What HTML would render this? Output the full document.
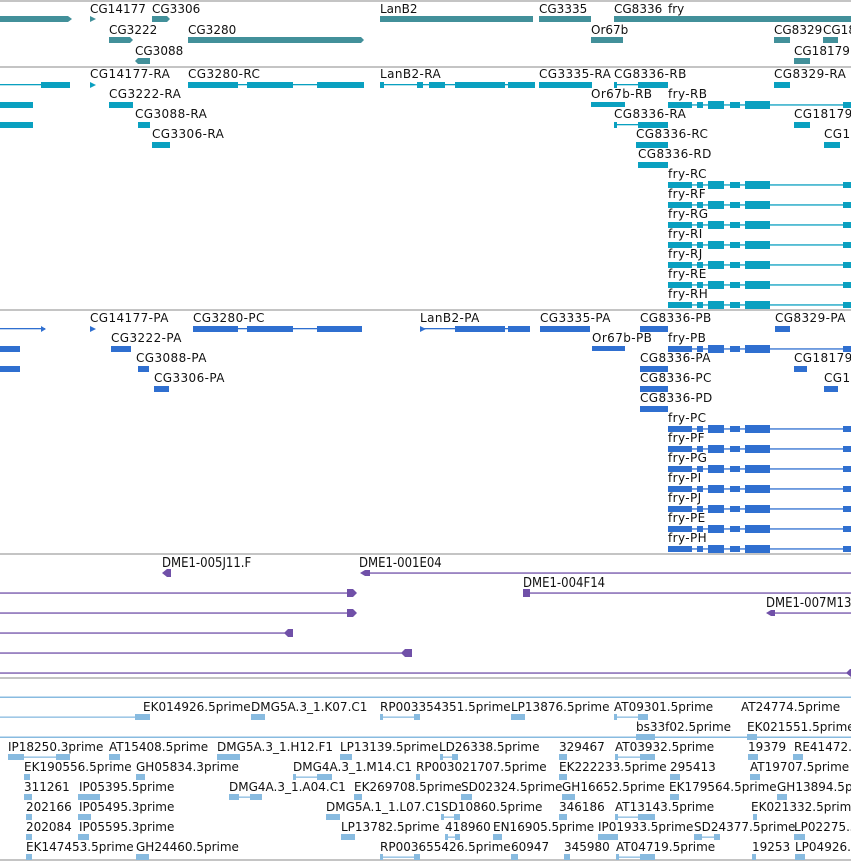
<!DOCTYPE html>
<html><head><meta charset="utf-8"><style>
html,body{margin:0;padding:0;background:#fff;overflow:hidden}
svg{display:block}
text{font-family:"DejaVu Sans","Liberation Sans",sans-serif;font-size:12px;fill:#111}
.t text{letter-spacing:0.4px}
.c text{font-family:"DejaVu Sans Condensed","DejaVu Sans",sans-serif;font-size:13px}
</style></head><body>
<svg width="851" height="862" xmlns="http://www.w3.org/2000/svg">
<g fill="#c4c4c4">
<rect x="0" y="0" width="851" height="2"/>
<rect x="0" y="66" width="851" height="2"/>
<rect x="0" y="309" width="851" height="2"/>
<rect x="0" y="553" width="851" height="2"/>
<rect x="0" y="677" width="851" height="2"/>
<rect x="0" y="859" width="851" height="2"/>
</g>

<g fill="#42909a">
<rect x="0" y="16" width="68" height="6"/><polygon points="68,16 72,19 68,22"/>
<polygon points="90,16 96,19 90,22"/>
<rect x="152" y="16" width="15" height="6"/><polygon points="167,16 170,19 167,22"/>
<rect x="380" y="16" width="153" height="6"/>
<rect x="539" y="16" width="52" height="6"/>
<rect x="614" y="16" width="237" height="6"/>
<rect x="109" y="37" width="21" height="6"/><polygon points="130,37 133,40 130,43"/>
<rect x="188" y="37" width="173" height="6"/><polygon points="361,37 364,40 361,43"/>
<rect x="591" y="37" width="32" height="6"/>
<rect x="774" y="37" width="16" height="6"/>
<rect x="823" y="37" width="15" height="6"/>
<rect x="138" y="58" width="12" height="6"/><polygon points="138,58 135,61 138,64"/>
<rect x="794" y="58" width="16" height="6"/>
</g>
<g>
<text x="90" y="13">CG14177</text><text x="152" y="13">CG3306</text>
<text x="380" y="13">LanB2</text><text x="539" y="13">CG3335</text>
<text x="614" y="13">CG8336</text><text x="668" y="13">fry</text>
<text x="109" y="34">CG3222</text><text x="188" y="34">CG3280</text>
<text x="591" y="34">Or67b</text><text x="774" y="34">CG8329</text><text x="823" y="34">CG18</text>
<text x="135" y="55">CG3088</text><text x="794" y="55">CG18179</text>
</g>

<g fill="#0aa0c0">
<rect x="0" y="84" width="70" height="1.3"/><rect x="41" y="82" width="29" height="6"/>
<polygon points="90,82 96,85 90,88"/>
<rect x="188" y="84" width="176" height="1.3"/>
<rect x="188" y="82" width="50" height="6"/><rect x="247" y="82" width="46" height="6"/><rect x="317" y="82" width="47" height="6"/>
<rect x="380" y="84" width="153" height="1.3"/>
<rect x="380" y="82" width="4" height="6"/><rect x="417" y="82" width="6" height="6"/><rect x="429" y="82" width="16" height="6"/><rect x="455" y="82" width="50" height="6"/><rect x="508" y="82" width="27" height="6"/>
<rect x="539" y="82" width="53" height="6"/>
<rect x="614" y="84" width="54" height="1.3"/><rect x="614" y="82" width="3" height="6"/><rect x="638" y="82" width="30" height="6"/>
<rect x="774" y="82" width="16" height="6"/>
<rect x="0" y="102" width="33" height="6"/>
<rect x="109" y="102" width="24" height="6"/>
<rect x="591" y="102" width="34" height="5"/>
<rect x="0" y="122" width="33" height="6"/>
<rect x="138" y="122" width="12" height="6"/>
<rect x="614" y="124" width="54" height="1.3"/><rect x="614" y="122" width="3" height="6"/><rect x="638" y="122" width="30" height="6"/>
<rect x="794" y="122" width="16" height="6"/>
<rect x="152" y="142" width="18" height="6"/>
<rect x="636" y="142" width="32" height="6"/>
<rect x="824" y="142" width="16" height="6"/>
<rect x="638" y="162" width="30" height="6"/>
</g>
<g class="t">
<text x="90" y="78">CG14177-RA</text><text x="188" y="78">CG3280-RC</text><text x="380" y="78">LanB2-RA</text>
<text x="539" y="78">CG3335-RA</text><text x="614" y="78">CG8336-RB</text><text x="774" y="78">CG8329-RA</text>
<text x="109" y="98">CG3222-RA</text><text x="591" y="98">Or67b-RB</text><text x="668" y="98">fry-RB</text>
<text x="135" y="118">CG3088-RA</text><text x="614" y="118">CG8336-RA</text><text x="794" y="118">CG18179</text>
<text x="152" y="138">CG3306-RA</text><text x="636" y="138">CG8336-RC</text><text x="824" y="138">CG18</text>
<text x="638" y="158">CG8336-RD</text>
<text x="668" y="178">fry-RC</text><text x="668" y="198">fry-RF</text><text x="668" y="218">fry-RG</text>
<text x="668" y="238">fry-RI</text><text x="668" y="258">fry-RJ</text><text x="668" y="278">fry-RE</text><text x="668" y="298">fry-RH</text>
</g>
<defs>
<g id="fry">
<rect x="668" y="-0.7" width="183" height="1.3"/>
<rect x="668" y="-3" width="24" height="6"/><rect x="697" y="-3" width="6" height="6"/><rect x="708" y="-4" width="16" height="8"/>
<rect x="730" y="-3" width="10" height="6"/><rect x="745" y="-4" width="25" height="8"/><rect x="843" y="-3" width="8" height="6"/>
</g>
</defs>
<g fill="#0aa0c0">
<use href="#fry" y="105"/><use href="#fry" y="185"/><use href="#fry" y="205"/><use href="#fry" y="225"/>
<use href="#fry" y="245"/><use href="#fry" y="265"/><use href="#fry" y="285"/><use href="#fry" y="305"/>
</g>

<g fill="#2f6fd0">
<rect x="0" y="328" width="45" height="1.3"/><polygon points="41,326 46,329 41,332"/>
<polygon points="90,326 96,329 90,332"/>
<rect x="193" y="328" width="169" height="1.3"/>
<rect x="193" y="326" width="45" height="6"/><rect x="247" y="326" width="46" height="6"/><rect x="317" y="326" width="45" height="6"/>
<polygon points="420,326 426,329 420,332"/><rect x="420" y="328" width="110" height="1.3"/><rect x="455" y="326" width="50" height="6"/><rect x="508" y="326" width="22" height="6"/>
<rect x="540" y="326" width="50" height="6"/>
<rect x="640" y="326" width="28" height="6"/>
<rect x="775" y="326" width="15" height="6"/>
<rect x="0" y="346" width="20" height="6"/>
<rect x="111" y="346" width="20" height="6"/>
<rect x="592" y="346" width="33" height="5"/>
<rect x="0" y="366" width="20" height="6"/>
<rect x="138" y="366" width="11" height="6"/>
<rect x="640" y="366" width="28" height="6"/>
<rect x="794" y="366" width="13" height="6"/>
<rect x="154" y="386" width="15" height="6"/>
<rect x="640" y="386" width="28" height="6"/>
<rect x="824" y="386" width="14" height="6"/>
<rect x="640" y="406" width="28" height="6"/>
<use href="#fry" y="349"/><use href="#fry" y="429"/><use href="#fry" y="449"/><use href="#fry" y="469"/>
<use href="#fry" y="489"/><use href="#fry" y="509"/><use href="#fry" y="529"/><use href="#fry" y="549"/>
</g>
<g class="t">
<text x="90" y="322">CG14177-PA</text><text x="193" y="322">CG3280-PC</text><text x="420" y="322">LanB2-PA</text>
<text x="540" y="322">CG3335-PA</text><text x="640" y="322">CG8336-PB</text><text x="775" y="322">CG8329-PA</text>
<text x="111" y="342">CG3222-PA</text><text x="592" y="342">Or67b-PB</text><text x="668" y="342">fry-PB</text>
<text x="136" y="362">CG3088-PA</text><text x="640" y="362">CG8336-PA</text><text x="794" y="362">CG18179</text>
<text x="154" y="382">CG3306-PA</text><text x="640" y="382">CG8336-PC</text><text x="824" y="382">CG18</text>
<text x="640" y="402">CG8336-PD</text>
<text x="668" y="422">fry-PC</text><text x="668" y="442">fry-PF</text><text x="668" y="462">fry-PG</text>
<text x="668" y="482">fry-PI</text><text x="668" y="502">fry-PJ</text><text x="668" y="522">fry-PE</text><text x="668" y="542">fry-PH</text>
</g>

<g fill="#7050a8">
<polygon points="162,573 167,569 171,569 171,577 167,577"/>
<polygon points="360,573 365,570 370,570 370,576 365,576"/><rect x="368" y="572.4" width="483" height="1.3"/>
<rect x="0" y="592.4" width="350" height="1.3"/><polygon points="347,589 353,589 357,593 353,597 347,597"/>
<rect x="523" y="589" width="7" height="8"/><rect x="528" y="592.4" width="323" height="1.3"/>
<rect x="0" y="612.4" width="350" height="1.3"/><polygon points="347,609 353,609 357,613 353,617 347,617"/>
<polygon points="766,613 771,610 775,610 775,616 771,616"/><rect x="773" y="612.4" width="78" height="1.3"/>
<rect x="0" y="632.4" width="290" height="1.3"/><polygon points="284,633 288,629 293,629 293,637 288,637"/>
<rect x="0" y="652.4" width="406" height="1.3"/><polygon points="401,653 405,649 412,649 412,657 405,657"/>
<rect x="0" y="672.4" width="851" height="1.3"/><polygon points="846,673 850,669 851,669 851,677"/>
</g>
<g class="c">
<text x="162" y="567">DME1-005J11.F</text><text x="359" y="567">DME1-001E04</text>
<text x="523" y="587">DME1-004F14</text><text x="766" y="607">DME1-007M13</text>
</g>

<g fill="#88bbe0">
<rect x="0" y="696.5" width="851" height="1.5"/>
<rect x="0" y="716.5" width="138" height="1.3"/><rect x="135" y="714" width="15" height="6"/>
<rect x="251" y="714" width="14" height="6"/>
<rect x="380" y="716.5" width="40" height="1.3"/><rect x="380" y="714" width="3" height="6"/><rect x="414" y="714" width="6" height="6"/>
<rect x="511" y="714" width="14" height="6"/>
<rect x="614" y="716.5" width="34" height="1.3"/><rect x="614" y="714" width="3" height="6"/><rect x="638" y="714" width="10" height="6"/>
<rect x="0" y="736.5" width="851" height="1.5"/><rect x="636" y="734" width="19" height="6"/>
<rect x="747" y="734" width="10" height="6"/>
<rect x="8" y="756.5" width="62" height="1.3"/><rect x="8" y="754" width="16" height="6"/><rect x="56" y="754" width="14" height="6"/>
<rect x="109" y="754" width="11" height="6"/><rect x="217" y="754" width="23" height="6"/><rect x="340" y="754" width="12" height="6"/>
<rect x="440" y="756.5" width="18" height="1.3"/><rect x="440" y="754" width="3" height="6"/><rect x="452" y="754" width="6" height="6"/>
<rect x="559" y="754" width="8" height="6"/>
<rect x="615" y="756.5" width="40" height="1.3"/><rect x="615" y="754" width="3" height="6"/><rect x="640" y="754" width="15" height="6"/>
<rect x="748" y="754" width="10" height="6"/><rect x="793" y="754" width="10" height="6"/>
<rect x="24" y="774" width="6" height="6"/><rect x="136" y="774" width="9" height="6"/>
<rect x="293" y="776.5" width="39" height="1.3"/><rect x="293" y="774" width="3" height="6"/><rect x="317" y="774" width="15" height="6"/>
<rect x="416" y="774" width="4" height="6"/><rect x="559" y="774" width="8" height="6"/><rect x="670" y="774" width="10" height="6"/><rect x="750" y="774" width="10" height="6"/>
<rect x="24" y="794" width="8" height="6"/><rect x="78" y="794" width="22" height="6"/>
<rect x="229" y="796.5" width="33" height="1.3"/><rect x="229" y="794" width="10" height="6"/><rect x="250" y="794" width="12" height="6"/>
<rect x="354" y="794" width="8" height="6"/><rect x="461" y="794" width="11" height="6"/><rect x="562" y="794" width="13" height="6"/>
<rect x="670" y="794" width="9" height="6"/><rect x="777" y="794" width="10" height="6"/>
<rect x="26" y="814" width="6" height="6"/><rect x="78" y="814" width="13" height="6"/><rect x="326" y="814" width="14" height="6"/>
<rect x="441" y="816.5" width="19" height="1.3"/><rect x="441" y="814" width="3" height="6"/><rect x="454" y="814" width="6" height="6"/>
<rect x="559" y="814" width="8" height="6"/>
<rect x="615" y="816.5" width="40" height="1.3"/><rect x="615" y="814" width="3" height="6"/><rect x="638" y="814" width="17" height="6"/>
<rect x="753" y="814" width="4" height="6"/>
<rect x="26" y="834" width="6" height="6"/><rect x="78" y="834" width="11" height="6"/><rect x="341" y="834" width="14" height="6"/>
<rect x="445" y="836.5" width="15" height="1.3"/><rect x="445" y="834" width="3" height="6"/><rect x="455" y="834" width="5" height="6"/>
<rect x="493" y="834" width="9" height="6"/><rect x="598" y="834" width="20" height="6"/>
<rect x="694" y="836.5" width="26" height="1.3"/><rect x="694" y="834" width="8" height="6"/><rect x="714" y="834" width="6" height="6"/>
<rect x="794" y="834" width="11" height="6"/>
<rect x="26" y="854" width="6" height="6"/><rect x="136" y="854" width="13" height="6"/>
<rect x="380" y="856.5" width="40" height="1.3"/><rect x="380" y="854" width="3" height="6"/><rect x="414" y="854" width="6" height="6"/>
<rect x="511" y="854" width="7" height="6"/><rect x="564" y="854" width="6" height="6"/>
<rect x="616" y="856.5" width="39" height="1.3"/><rect x="616" y="854" width="3" height="6"/><rect x="640" y="854" width="15" height="6"/>
<rect x="752" y="854" width="4" height="6"/><rect x="795" y="854" width="10" height="6"/>
</g>
<g>
<text x="143" y="711">EK014926.5prime</text><text x="251" y="711">DMG5A.3_1.K07.C1</text>
<text x="380" y="711">RP003354351.5prime</text><text x="511" y="711">LP13876.5prime</text>
<text x="614" y="711">AT09301.5prime</text><text x="741" y="711">AT24774.5prime</text>
<text x="636" y="731">bs33f02.5prime</text><text x="747" y="731">EK021551.5prime</text>
<text x="8" y="751">IP18250.3prime</text><text x="109" y="751">AT15408.5prime</text><text x="217" y="751">DMG5A.3_1.H12.F1</text>
<text x="340" y="751">LP13139.5prime</text><text x="439" y="751">LD26338.5prime</text><text x="559" y="751">329467</text>
<text x="615" y="751">AT03932.5prime</text><text x="748" y="751">19379</text><text x="794" y="751">RE41472.5prime</text>
<text x="24" y="771">EK190556.5prime</text><text x="136" y="771">GH05834.3prime</text><text x="293" y="771">DMG4A.3_1.M14.C1</text>
<text x="416" y="771">RP003021707.5prime</text><text x="559" y="771">EK222233.5prime</text><text x="670" y="771">295413</text>
<text x="750" y="771">AT19707.5prime</text>
<text x="24" y="791">311261</text><text x="79" y="791">IP05395.5prime</text><text x="229" y="791">DMG4A.3_1.A04.C1</text>
<text x="354" y="791">EK269708.5prime</text><text x="461" y="791">SD02324.5prime</text><text x="562" y="791">GH16652.5prime</text>
<text x="669" y="791">EK179564.5prime</text><text x="777" y="791">GH13894.5prime</text>
<text x="26" y="811">202166</text><text x="79" y="811">IP05495.3prime</text><text x="326" y="811">DMG5A.1_1.L07.C1</text>
<text x="441" y="811">SD10860.5prime</text><text x="559" y="811">346186</text><text x="615" y="811">AT13143.5prime</text>
<text x="751" y="811">EK021332.5prime</text>
<text x="26" y="831">202084</text><text x="79" y="831">IP05595.3prime</text><text x="341" y="831">LP13782.5prime</text>
<text x="445" y="831">418960</text><text x="493" y="831">EN16905.5prime</text><text x="598" y="831">IP01933.5prime</text>
<text x="694" y="831">SD24377.5prime</text><text x="794" y="831">LP02275.5prime</text>
<text x="26" y="851">EK147453.5prime</text><text x="136" y="851">GH24460.5prime</text><text x="380" y="851">RP003655426.5prime</text>
<text x="511" y="851">60947</text><text x="564" y="851">345980</text><text x="616" y="851">AT04719.5prime</text>
<text x="752" y="851">19253</text><text x="795" y="851">LP04926.5prime</text>
</g>
</svg>
</body></html>
